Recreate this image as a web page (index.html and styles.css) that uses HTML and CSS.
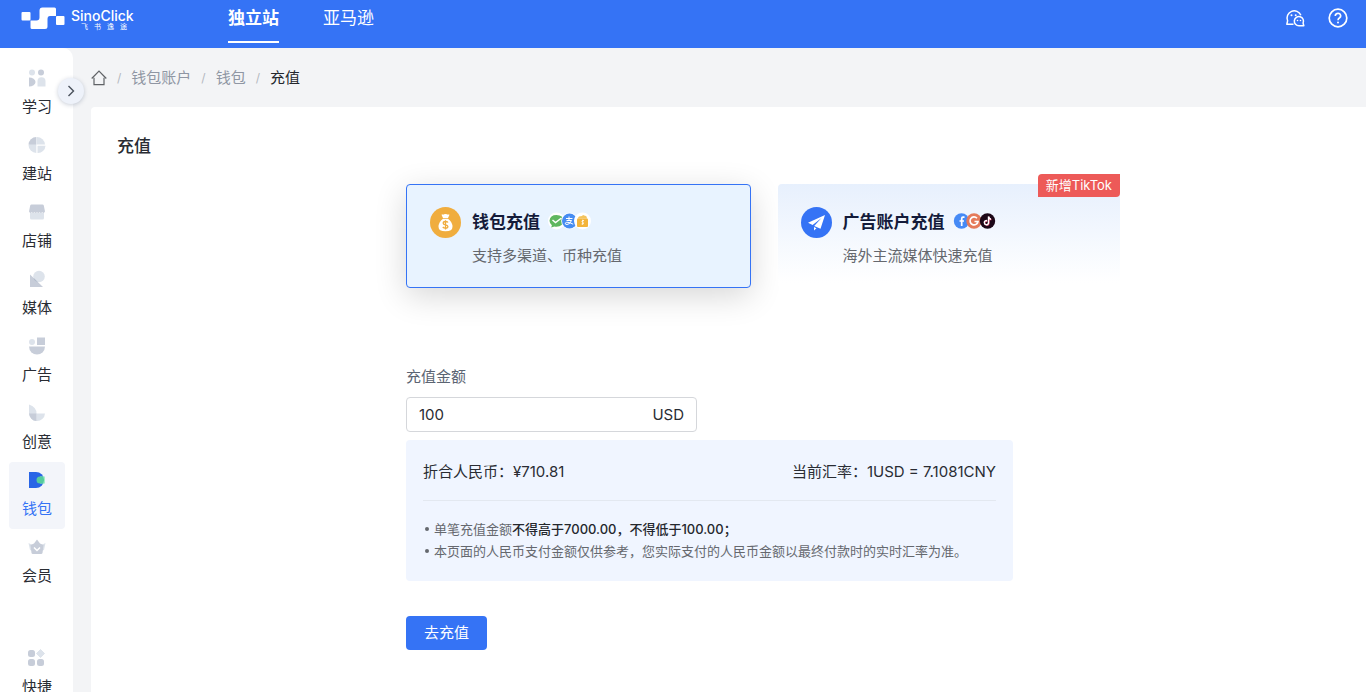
FILE: index.html
```html
<!DOCTYPE html>
<html lang="zh-CN">
<head>
<meta charset="utf-8">
<meta name="viewport" content="width=device-width, initial-scale=1">
<title>充值 - SinoClick</title>
<link rel="stylesheet" href="styles.css">
</head>
<body>
<header class="topbar">
  <a class="logo" href="#">
    <svg class="logo-mark" width="44" height="22" viewBox="0 0 44 22" fill="#fff" aria-hidden="true">
      <rect x="0.5" y="5" width="9" height="8.500" rx="1"/>
      <path d="M9.500 13.500H15.500Q18.500 13.500 18.500 10.500V3.500Q18.500.500 21.500.500H33.500Q35 .500 35 2V9H29Q26.500 9 26.500 12V19.500Q26.500 22 24 22H11Q9.500 22 9.500 20.500Z"/>
      <rect x="35" y="9" width="8.500" height="9" rx="1"/>
    </svg>
    <span class="logo-words">
      <span class="logo-name">SinoClick</span>
      <span class="logo-sub"><span>飞</span><span>书</span><span>逸</span><span>途</span></span>
    </span>
  </a>
  <nav class="tabs">
    <a class="tab tab-active" href="#">独立站</a>
    <a class="tab" href="#">亚马逊</a>
  </nav>
  <div class="tools">
    <button class="tool" type="button" aria-label="客服">
      <svg width="20" height="20" viewBox="0 0 20 20" fill="none" stroke="#fff" stroke-width="1.500" stroke-linejoin="round" aria-hidden="true">
        <path d="M8.500 16.300H1.800L2.600 12.800A7 7 0 1 1 15.900 7.300"/>
        <path d="M18.100 15.100A4.600 4.600 0 1 0 14 17.800H18.800Z"/>
        <g fill="#fff" stroke="none"><circle cx="6.500" cy="7.200" r="1"/><circle cx="10.700" cy="7.200" r="1"/><circle cx="12.500" cy="12.500" r=".8"/><circle cx="15.500" cy="12.500" r=".8"/></g>
      </svg>
    </button>
    <button class="tool" type="button" aria-label="帮助">
      <svg width="20" height="20" viewBox="0 0 20 20" fill="none" stroke="#fff" stroke-width="1.700" aria-hidden="true">
        <circle cx="10" cy="10" r="8.800"/>
        <path d="M7.300 8A2.700 2.500 0 1 1 11.600 9.800Q10 10.800 10 12.200"/>
        <circle cx="10" cy="14.600" r="1" fill="#fff" stroke="none"/>
      </svg>
    </button>
  </div>
</header>

<div class="shell">
  <aside class="sidebar">
    <nav class="side-nav">
      <a class="side-item" href="#">
        <svg width="18" height="18" viewBox="0 0 18 18" aria-hidden="true"><circle cx="4" cy="3.500" r="3" fill="#dde3eb"/><circle cx="13" cy="3.500" r="3" fill="#c7cdd9"/><path d="M1 8.500a6.500 4.500 0 0 1 0 9z" fill="#c7cdd9"/><path d="M9.500 17.500V12a4 3.800 0 0 1 8 0v5.500z" fill="#dde3eb"/></svg>
        <span>学习</span>
      </a>
      <a class="side-item" href="#">
        <svg width="18" height="18" viewBox="0 0 18 18" aria-hidden="true"><path d="M8.300 1v16A8 8 0 0 1 .5 9z" fill="#dde3eb"/><path d="M8.300 1V8.500H.5A8 8 0 0 1 8.300 1z" fill="#c7cdd9"/><path d="M9 1a8 8 0 0 1 8 7.500H9z" fill="#dde3eb"/><path d="M9.500 9.800H17.500A7.500 7.500 0 0 1 9.500 17z" fill="#dde3eb"/></svg>
        <span>建站</span>
      </a>
      <a class="side-item" href="#">
        <svg width="18" height="18" viewBox="0 0 18 18" aria-hidden="true"><path d="M2 10H16V15q0 1.500-1.500 1.500h-11Q2 16.500 2 15z" fill="#dde3eb"/><path d="M3.500 1.500h11q1 0 1.300 1L17 8.500q-1 2.500-2.700.8-1.500 1.500-2.700 0-1.300 1.500-2.600 0-1.300 1.500-2.600 0-1.300 1.500-2.700 0Q2 11 1 8.500L2.200 2.500q.3-1 1.300-1z" fill="#c7cdd9"/></svg>
        <span>店铺</span>
      </a>
      <a class="side-item" href="#">
        <svg width="18" height="18" viewBox="0 0 18 18" aria-hidden="true"><circle cx="11" cy="6.500" r="5.800" fill="#dde3eb"/><path d="M2 4.500L15 17H2z" fill="#c7cdd9"/><path d="M5.400 7.800L10 12.200A5.800 5.800 0 0 1 5.400 7.800z" fill="#b2bccb"/></svg>
        <span>媒体</span>
      </a>
      <a class="side-item" href="#">
        <svg width="18" height="18" viewBox="0 0 18 18" aria-hidden="true"><circle cx="4" cy="5" r="3" fill="#dde3eb"/><path d="M9 .5h8V8H9z" fill="#c7cdd9"/><path d="M1 9.500H17a8 8 0 0 1-16 0z" fill="#c7cdd9"/></svg>
        <span>广告</span>
      </a>
      <a class="side-item" href="#">
        <svg width="18" height="18" viewBox="0 0 18 18" aria-hidden="true"><path d="M1 .5Q8.500 3 8.500 9.500V17A8 8 0 0 1 1 9.500z" fill="#dde3eb"/><path d="M8.500 9.500H17A8 8 0 0 1 8.500 17z" fill="#dde3eb"/><path d="M1 9.500H8.500V17A8 8 0 0 1 1 9.500z" fill="#c7cdd9"/></svg>
        <span>创意</span>
      </a>
      <a class="side-item side-active" href="#" aria-current="page">
        <svg width="18" height="18" viewBox="0 0 18 18" aria-hidden="true"><path d="M1 1H8A8 8 0 0 1 8 17H1z" fill="#2865e6"/><path d="M12 5.500h5v7h-5z" fill="#a5edc8"/><path d="M15.300 5.500H12a3.500 3.500 0 0 0 0 7h3.300a8 8 0 0 0 0-7z" fill="#55cc9e"/></svg>
        <span>钱包</span>
      </a>
      <a class="side-item" href="#">
        <svg width="18" height="18" viewBox="0 0 18 18" aria-hidden="true"><path d="M.5 5l4 2v6L2 12zM17.500 5l-4 2v6l2.500-1z" fill="#dde3eb"/><path d="M9 1.500l3 4 3.500 1.500L14.500 15q-.2 1-1.500 1H5q-1.300 0-1.500-1L2.500 7 6 5.500z" fill="#c7cdd9"/><path d="M6 9.500L9 12.500 12 9.500" fill="none" stroke="#fff" stroke-width="1.500"/></svg>
        <span>会员</span>
      </a>
    </nav>
    <a class="side-item side-quick" href="#">
      <svg width="18" height="18" viewBox="0 0 18 18" aria-hidden="true"><g fill="#c7cdd9"><rect x="0" y="1" width="7" height="7" rx="2.500"/><rect x="0" y="10" width="7" height="7" rx="2.500"/><rect x="9" y="10" width="7" height="7" rx="2.500"/></g><path d="M12.500.500L16.500 4.500 12.500 8.500 8.500 4.500z" fill="#dde3eb" stroke="#dde3eb" stroke-linejoin="round"/></svg>
      <span>快捷</span>
    </a>
    <button class="expand" type="button" aria-label="展开菜单">
      <svg width="8" height="12" viewBox="0 0 8 12" fill="none" stroke="#4a515c" stroke-width="1.400" aria-hidden="true"><path d="M1.500 1L6.500 6 1.500 11"/></svg>
    </button>
  </aside>

  <main class="main">
    <nav class="crumbs" aria-label="面包屑">
      <a class="crumb-home" href="#" aria-label="首页">
        <svg width="16" height="16" viewBox="0 0 16 16" fill="none" stroke="#5f6266" stroke-width="1.200" aria-hidden="true"><path d="M.7 8.500L8 1.200 15.300 8.500M3 7.800V14.700H13V7.800"/></svg>
      </a>
      <span class="slash">/</span>
      <a href="#">钱包账户</a>
      <span class="slash">/</span>
      <a href="#">钱包</a>
      <span class="slash">/</span>
      <span class="crumb-now">充值</span>
    </nav>

    <section class="panel">
      <h1 class="title">充值</h1>
      <div class="form-area">
        <form class="form">
          <div class="cards">
            <button class="card card-on" type="button" aria-pressed="true">
              <svg class="card-icon" width="31" height="31" viewBox="0 0 31 31" aria-hidden="true"><circle cx="15.500" cy="15.500" r="15.500" fill="#f0ad3e"/><path d="M12 7.300q1.200.7 2 0 1.500-.8 3 0 1 .7 2 0 .6.300.3.900L18 11h-5l-1.300-2.800q-.3-.6.3-.9z" fill="#fff"/><path d="M13 11.700h5q4.500 3.500 4.500 8 0 4.600-7 4.600t-7-4.600q0-4.500 4.500-8z" fill="#fff"/><path d="M18 15.500q-.7-1-2.500-1-2.300 0-2.300 1.700 0 1.300 2.300 1.600t2.400 1.700q0 1.700-2.400 1.700-1.800 0-2.700-1.200M15.500 13.300V22.500" fill="none" stroke="#f0ad3e" stroke-width="1.300"/></svg>
              <span class="card-body">
                <span class="card-head">钱包充值
                  <svg width="43" height="20" viewBox="0 0 43 20" aria-hidden="true"><circle cx="8.500" cy="9" r="8.500" fill="#fff"/><path d="M8.500 3q6.800.2 6.800 5.800T8.500 14.800q-1 0-2-.2l-3.300 1 .7-2.300Q1.500 11.500 1.500 8.800 2 3 8.500 3z" fill="#5fb760"/><path d="M4.500 8l3 2.600L13.500 6" fill="none" stroke="#fff" stroke-width="1.500"/><circle cx="21.500" cy="9" r="8.300" fill="#fff"/><circle cx="21.500" cy="9" r="7.500" fill="#468cf2"/><path d="M18 6.500h6.500M21 4.500V9M18.500 8.500h5q-1.500 4-4.500 4-2 0-1.800-1.300 1.500-2.300 8 1" fill="none" stroke="#fff" stroke-width="1"/><circle cx="34.500" cy="9" r="8.500" fill="#fff"/><path d="M29.500 6.500L31 4.500l3-.5 1-1 2 .8q2-.2 2 2.700z" fill="#f3c45e"/><rect x="29" y="6.500" width="11" height="8.500" rx="1" fill="#f3b43b"/><path d="M36 8.500h-1.500q-1 1 0 1.600 1.800.6.500 1.900h-1.500M34.700 7.700v5" fill="none" stroke="#fff" stroke-width=".8"/></svg>
                </span>
                <span class="card-text">支持多渠道、币种充值</span>
              </span>
            </button>
            <button class="card card-off" type="button" aria-pressed="false">
              <svg class="card-icon" width="31" height="31" viewBox="0 0 31 31" aria-hidden="true"><circle cx="15.500" cy="15.500" r="15.500" fill="#3573f5"/><path d="M24 8L7 15.800l4.600 2.100L20.500 11l-7.300 8 6.300 2.800zM13 20v3.500l2.500-2.300z" fill="#fff"/></svg>
              <span class="card-body">
                <span class="card-head">广告账户充值
                  <svg width="43" height="20" viewBox="0 0 43 20" aria-hidden="true"><circle cx="8.500" cy="9" r="7.700" fill="#468af5"/><path d="M11.500 5.200H10q-1.300 0-1.300 1.500V14M6.500 9h4.500" fill="none" stroke="#fff" stroke-width="1.700"/><circle cx="21" cy="9" r="7.700" fill="#e57a5a"/><path d="M24 6.200A4 4 0 1 0 25 9.500H21.500" fill="none" stroke="#fff" stroke-width="1.700"/><circle cx="34.500" cy="9" r="7.700" fill="#1c0717"/><path d="M34.500 9q-2.800 0-2.700 2.300.2 2 2.200 1.900 2-.2 2-2.300V5q.5 2.500 2.500 2.700" fill="none" stroke="#e84a72" stroke-width="1.300"/><path d="M34 8.500q-2.800 0-2.700 2.300.2 2 2.200 1.900 2-.2 2-2.300V4.500q.5 2.500 2.500 2.700" fill="none" stroke="#fff" stroke-width="1.400"/></svg>
                </span>
                <span class="card-text">海外主流媒体快速充值</span>
              </span>
              <span class="badge">新增TikTok</span>
            </button>
          </div>

          <label class="label" for="amount">充值金额</label>
          <div class="field">
            <input id="amount" class="amount" type="text" inputmode="decimal" value="100">
            <span class="unit">USD</span>
          </div>

          <div class="info">
            <div class="rates">
              <span>折合人民币：¥710.81</span>
              <span>当前汇率：1USD = 7.1081CNY</span>
            </div>
            <ul class="notes">
              <li>单笔充值金额<strong>不得高于7000.00，不得低于100.00；</strong></li>
              <li>本页面的人民币支付金额仅供参考，您实际支付的人民币金额以最终付款时的实时汇率为准。</li>
            </ul>
          </div>
          <button class="submit" type="button">去充值</button>
        </form>
      </div>
    </section>
  </main>
</div>
</body>
</html>
```
FILE: styles.css
```css
* {
  box-sizing: border-box;
}

body {
  margin: 0;
  height: 100vh;
  overflow: hidden;
  display: flex;
  flex-direction: column;
  background: #f3f4f6;
  color: #292c33;
  font: 15px/22px Inter, "Noto Sans CJK SC", sans-serif;
}

a {
  color: inherit;
  text-decoration: none;
}

button,
input {
  font: inherit;
  color: inherit;
}

button {
  border: 0;
  padding: 0;
  background: none;
  cursor: pointer;
}

svg {
  display: block;
  flex: none;
}

/* Top bar */
.topbar {
  flex: none;
  display: flex;
  align-items: flex-start;
  height: 48px;
  padding: 0 18px 0 21px;
  background: #3573f5;
  color: #fff;
}

.logo {
  display: flex;
  gap: 6px;
  width: 207px;
  padding-top: 7px;
}

.logo-words {
  display: flex;
  flex-direction: column;
  padding-top: 2px;
}

.logo-name {
  font-size: 14px;
  line-height: 14px;
  font-weight: 500;
}

.logo-sub {
  display: flex;
  gap: 6px;
  padding-left: 10px;
  font-size: 7px;
  line-height: 8px;
}

.tabs {
  display: flex;
  gap: 44px;
}

.tab {
  height: 43px;
  padding-top: 6px;
  font-size: 17px;
  line-height: 24px;
  border-bottom: 2px solid transparent;
}

.tab-active {
  font-weight: 700;
  border-color: #fff;
}

.tools {
  display: flex;
  gap: 23px;
  margin-left: auto;
  padding-top: 8px;
}

/* Frame */
.shell {
  flex: 1;
  display: flex;
  min-height: 0;
}

.sidebar {
  position: relative;
  flex: none;
  display: flex;
  flex-direction: column;
  width: 73px;
  padding: 12px 8px 0 9px;
  background: #fff;
  border-top-right-radius: 10px;
}

.side-item {
  display: flex;
  flex-direction: column;
  align-items: center;
  gap: 9px;
  height: 67px;
  padding-top: 9px;
  border-radius: 4px;
}

.side-active {
  background: #f3f5fa;
  color: #3573f5;
}

.side-quick {
  margin-top: 44px;
}

.expand {
  position: absolute;
  top: 30px;
  right: -11px;
  display: grid;
  place-items: center;
  width: 26px;
  height: 26px;
  border-radius: 50%;
  background: #eef2fa;
  box-shadow: 0 1px 4px rgba(40, 60, 100, 0.25);
}

.main {
  flex: 1;
  display: flex;
  flex-direction: column;
  min-width: 0;
  padding-left: 18px;
}

.crumbs {
  display: flex;
  align-items: center;
  gap: 10px;
  height: 59px;
  color: #8f96a3;
}

.slash {
  color: #b4b8c0;
  font-size: 12px;
}

.crumb-now {
  color: #24272d;
}

.panel {
  flex: 1;
  padding: 27px 26px;
  background: #fff;
  border-top-left-radius: 4px;
}

.title {
  margin: 0;
  font-size: 17px;
  line-height: 24px;
  font-weight: 500;
}

/* Recharge form */
.form-area {
  padding-left: 69px;
}

.form {
  max-width: 714px;
  margin: 26px auto 0;
}

.cards {
  display: flex;
  gap: 27px;
}

.card {
  position: relative;
  flex: 1;
  display: flex;
  gap: 11px;
  height: 104px;
  padding: 23px;
  border-radius: 4px;
  text-align: left;
}

.card-on {
  padding: 22px 23px;
  border: 1px solid #3573f5;
  background: #e8f3ff;
  box-shadow: 0 8px 32px rgba(0, 0, 0, 0.16);
}

.card-off {
  background: linear-gradient(#e7f0fd, #fff 95%);
}

.card-body {
  display: flex;
  flex-direction: column;
  gap: 8px;
}

.card-head {
  display: flex;
  align-items: center;
  gap: 8px;
  color: #141b3a;
  font-size: 17px;
  line-height: 30px;
  font-weight: 700;
}

.card-text {
  color: #65686e;
}

.badge {
  position: absolute;
  top: -10px;
  right: 0;
  padding: 0 8px;
  border-radius: 4px 0;
  background: #ed5a58;
  color: #fff;
  font-size: 13px;
  line-height: 23px;
}

.label {
  display: block;
  margin-top: 78px;
  color: #5b6472;
}

.field {
  display: flex;
  align-items: center;
  width: 291px;
  height: 35px;
  margin-top: 9px;
  padding: 0 12px;
  border: 1px solid #d5d7db;
  border-radius: 4px;
}

.amount {
  flex: 1;
  min-width: 0;
  padding: 0;
  border: 0;
  outline: 0;
  background: none;
}

.info {
  max-width: 607px;
  margin-top: 8px;
  padding: 21px 17px 19px;
  border-radius: 4px;
  background: #f0f5ff;
}

.rates {
  display: flex;
  justify-content: space-between;
  padding-bottom: 17px;
  border-bottom: 1px solid #e3e8f0;
}

.notes {
  margin: 0;
  padding: 17px 0 0;
  list-style: none;
  color: #65686e;
  font-size: 13px;
}

.notes li {
  display: flex;
  align-items: center;
}

.notes li::before {
  content: "";
  width: 4px;
  height: 4px;
  margin: 0 5px 0 2px;
  border-radius: 50%;
  background: #65686e;
}

.notes strong {
  color: #24272d;
  font-weight: 500;
}

.submit {
  margin-top: 35px;
  padding: 0 18px;
  border-radius: 4px;
  background: #3573f5;
  color: #fff;
  line-height: 34px;
}
```
